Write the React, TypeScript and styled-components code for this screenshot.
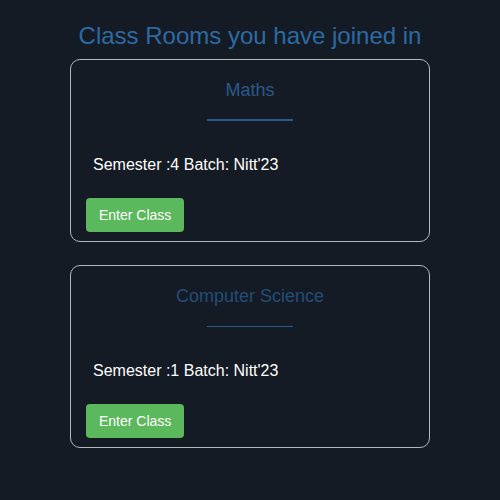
import React from 'react'
import styled, { createGlobalStyle } from 'styled-components'

interface ClassRoom {
  name: string
  semester: number
  batch: string
}

const rooms: ClassRoom[] = [
  { name: 'Maths', semester: 4, batch: "Nitt'23" },
  { name: 'Computer Science', semester: 1, batch: "Nitt'23" },
]

const GlobalStyle = createGlobalStyle`
  html, body {
    margin: 0;
    padding: 0;
    background: #151b24;
    font-family: "Liberation Sans", Arial, sans-serif;
  }
`

const App: React.FC = () => {
  return (
    <>
      <GlobalStyle />
      <Page>
        <Title>Class Rooms you have joined in</Title>
        <CardList>
          {rooms.map((room, i) => (
            <Card key={room.name}>
              <CardTitle $muted={i > 0}>{room.name}</CardTitle>
              <Underline $thin={i > 0} />
              <Info>
                Semester :{room.semester} Batch: {room.batch}
              </Info>
              <EnterButton>Enter Class</EnterButton>
            </Card>
          ))}
        </CardList>
      </Page>
    </>
  )
}

export default App

const Page = styled.div`
  display: flex;
  flex-direction: column;
  align-items: center;
  padding-top: 22px;
  min-height: 500px;
  box-sizing: border-box;
`

const Title = styled.h1`
  margin: 0 0 9px;
  font-size: 24px;
  line-height: 28px;
  font-weight: 400;
  color: #2c6aa3;
`

const CardList = styled.div`
  display: flex;
  flex-direction: column;
  gap: 23px;
`

const Card = styled.div`
  width: 360px;
  box-sizing: border-box;
  border: 1px solid #b4b8bf;
  border-radius: 10px;
  padding: 20px 15px 9px;
  display: flex;
  flex-direction: column;
`

const CardTitle = styled.h3<{ $muted?: boolean }>`
  margin: 0;
  font-size: 18px;
  line-height: 21px;
  font-weight: 400;
  text-align: center;
  color: ${({ $muted }) => ($muted ? '#214d78' : '#28598a')};
`

const Underline = styled.div<{ $thin?: boolean }>`
  align-self: center;
  width: 86px;
  height: ${({ $thin }) => ($thin ? '1px' : '2px')};
  margin-top: ${({ $thin }) => ($thin ? '19px' : '18px')};
  background: #28598a;
`

const Info = styled.p`
  margin: 35px 0 0;
  padding: 0 7px;
  font-size: 16px;
  line-height: 18px;
  color: #ffffff;
`

const EnterButton = styled.button`
  align-self: flex-start;
  margin-top: 24px;
  height: 34px;
  padding: 0 13px;
  border: none;
  border-radius: 4px;
  background: #5cb85c;
  color: #ffffff;
  font-family: "Liberation Sans", Arial, sans-serif;
  font-size: 14px;
  cursor: pointer;
`
